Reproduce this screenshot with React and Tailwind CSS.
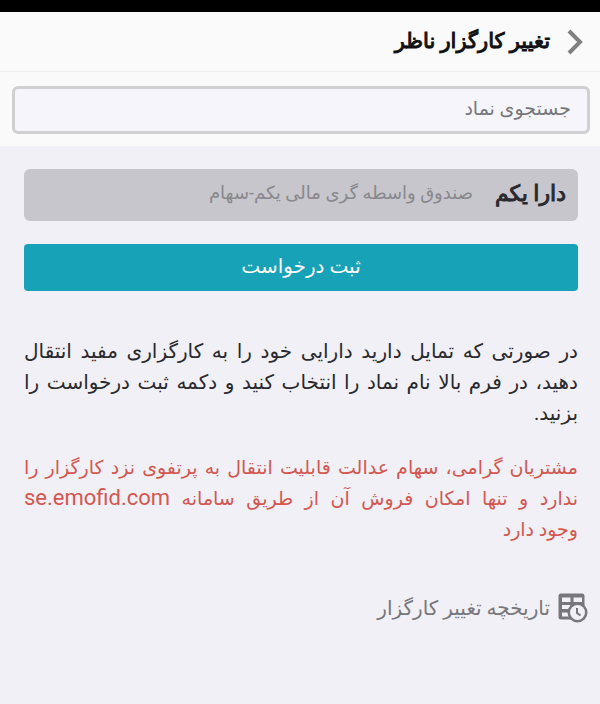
const SITE = "se.emofid.com";

const notes = [
  {
    text: "در صورتی که تمایل دارید دارایی خود را به کارگزاری مفید انتقال دهید، در فرم بالا نام نماد را انتخاب کنید و دکمه ثبت درخواست را بزنید.",
    style: "text-xl text-[#29292e]",
  },
  {
    text: "مشتریان گرامی، سهام عدالت قابلیت انتقال به پرتفوی نزد کارگزار را ندارد و تنها امکان فروش آن از طریق سامانه se.emofid.com وجود\u00a0دارد",
    style: "text-[19px] text-[#d4574f]",
  },
];

const HistoryIcon = () => (
  <svg width="30" height="30" viewBox="0 0 30 30" aria-hidden="true">
    <rect x="0.500" y="0.500" width="26" height="26" rx="2.500" fill="#77777b" />
    <path
      d="M4 4.500h8.500V9H4zM15.500 4.500H24V9h-8.500zM4 12h8.500v4H4zM15.500 12H24v4h-8.500zM4 19.500h8.500V23.500H4z"
      fill="#f1f0f7"
    />
    <circle cx="19.500" cy="19.500" r="10" fill="#77777b" />
    <circle cx="19.500" cy="19.500" r="7.500" fill="#f1f0f7" />
    <path d="M19 15v5l3.500 2.500" fill="none" stroke="#77777b" strokeWidth="2" />
  </svg>
);

const NoteText = ({ text }) => {
  const [before, after] = text.split(SITE);
  if (after === undefined) return text;
  return (
    <>
      {before}
      <span dir="ltr" className="inline-block text-[22px] leading-6">{SITE}</span>
      {after}
    </>
  );
};

const App = () => {
  return (
    <div dir="rtl" lang="fa" className="min-h-screen bg-[#f1f0f7] font-['Roboto','DejaVu_Sans',sans-serif]">
      <div className="h-3 bg-black" />
      <header className="flex h-15 items-center gap-4 border-b border-[#efefef] bg-[#fafafa] px-4">
        <button type="button" aria-label="بازگشت">
          <svg width="18" height="28" viewBox="0 0 18 28" fill="none" stroke="#808080" strokeWidth="4" aria-hidden="true">
            <path d="M3 3l11 11L3 25" />
          </svg>
        </button>
        <h1 className="text-[21px] text-[#111113] [-webkit-text-stroke:1px_#111113]">تغییر کارگزار ناظر</h1>
      </header>

      <div className="bg-[#fafafa] pt-3.5 pr-2.5 pb-3 pl-3">
        <input
          type="text"
          aria-label="جستجوی نماد"
          placeholder="جستجوی نماد"
          className="h-12 w-full rounded-md border-3 border-[#d0d0d3] bg-[#f5f5fb] px-4 pb-1 text-[19px] placeholder:text-[#77777b]"
        />
      </div>

      <main className="pt-[23px] pr-[22px] pl-6">
        <button type="button" className="flex h-13 w-full items-center gap-[22px] rounded-md bg-[#c7c6cc] px-3 pb-1">
          <span className="text-[22px] text-[#29292e] [-webkit-text-stroke:1px_#29292e]">دارا یکم</span>
          <span className="text-lg text-[#88888c]">صندوق واسطه گری مالی یکم-سهام</span>
        </button>
        <button type="button" className="mt-[23px] h-[47px] w-full rounded-sm bg-[#17a2b8] pb-1 text-xl text-white">
          ثبت درخواست
        </button>

        <div className="mt-[45px] space-y-[23px]">
          {notes.map((note) => (
            <p key={note.text} className={`text-justify leading-[31px] ${note.style}`}>
              <NoteText text={note.text} />
            </p>
          ))}
        </div>
      </main>

      <a href="#history" className="mt-12 flex items-center gap-2 px-3 text-xl leading-7 text-[#77777b]">
        <HistoryIcon />
        تاریخچه تغییر کارگزار
      </a>
    </div>
  );
};

export default App;
